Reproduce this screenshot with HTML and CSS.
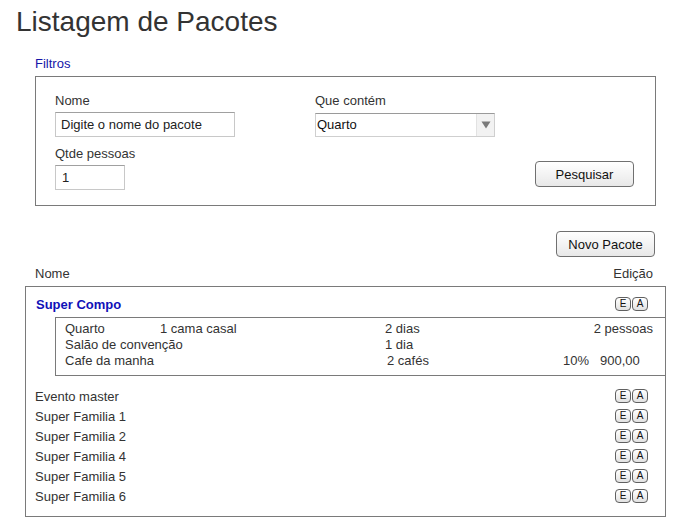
FILE: index.html
```html
<!DOCTYPE html>
<html lang="pt">
<head>
<meta charset="utf-8">
<title>Listagem de Pacotes</title>
<link rel="stylesheet" href="styles.css">
</head>
<body>
<h1 class="title">Listagem de Pacotes</h1>
<main class="page">
  <section class="filters">
    <div class="filters-label">Filtros</div>
    <div class="filters-box">
      <div class="field">
        <label class="field-label">Nome</label>
        <div class="input input-name">Digite o nome do pacote</div>
      </div>
      <div class="field">
        <label class="field-label">Que contém</label>
        <div class="select">
          <span class="select-value">Quarto</span>
          <span class="select-arrow"><svg width="10" height="8" viewBox="0 0 10 8"><path d="M0.5 0.5 H9.5 L5 7.5 Z" fill="#7a7a7a"/></svg></span>
        </div>
      </div>
      <div class="field">
        <label class="field-label">Qtde pessoas</label>
        <div class="input input-qty">1</div>
      </div>
      <div class="search-cell">
        <button class="btn">Pesquisar</button>
      </div>
    </div>
  </section>

  <div class="actions">
    <button class="btn">Novo Pacote</button>
  </div>

  <div class="list-head">
    <span>Nome</span>
    <span>Edição</span>
  </div>

  <div class="list">
    <div class="row row-open">
      <span class="pkg-name">Super Compo</span>
      <span class="edit"><span class="mini">E</span><span class="mini">A</span></span>
    </div>
    <div class="details">
      <span>Quarto</span><span>1 cama casal</span><span>2 dias</span><span class="span2 right">2 pessoas</span>
      <span>Salão de convenção</span><span></span><span>1 dia</span><span></span><span></span>
      <span>Cafe da manha</span><span></span><span class="indent">2 cafés</span><span>10%</span><span>900,00</span>
    </div>
    <div class="rows">
      <div class="row"><span>Evento master</span><span class="edit"><span class="mini">E</span><span class="mini">A</span></span></div>
      <div class="row"><span>Super Familia 1</span><span class="edit"><span class="mini">E</span><span class="mini">A</span></span></div>
      <div class="row"><span>Super Familia 2</span><span class="edit"><span class="mini">E</span><span class="mini">A</span></span></div>
      <div class="row"><span>Super Familia 4</span><span class="edit"><span class="mini">E</span><span class="mini">A</span></span></div>
      <div class="row"><span>Super Familia 5</span><span class="edit"><span class="mini">E</span><span class="mini">A</span></span></div>
      <div class="row"><span>Super Familia 6</span><span class="edit"><span class="mini">E</span><span class="mini">A</span></span></div>
    </div>
  </div>
</main>
</body>
</html>
```

FILE: styles.css
```css
* { box-sizing: border-box; }

body {
  margin: 0;
  background: #fff;
  color: #333;
  font-family: "Liberation Sans", Arial, sans-serif;
  font-size: 13px;
  line-height: 16px;
}

.title {
  margin: 6px 0 0 16px;
  font-size: 28px;
  line-height: 32px;
  font-weight: normal;
  color: #333;
}

.page {
  padding: 0 7px 0 25px;
}

.filters {
  margin: 18px 10px 0 10px;
}

.filters-label {
  color: #1515a8;
  line-height: 15px;
  margin-bottom: 5px;
}

.filters-box {
  border: 1px solid #7a7a7a;
  display: grid;
  grid-template-columns: 260px 1fr;
  row-gap: 9px;
  padding: 16px 21px 15px 19px;
}

.field {
  display: flex;
  flex-direction: column;
  align-items: flex-start;
}

.field-label {
  line-height: 16px;
  margin-bottom: 3px;
}

.input {
  height: 25px;
  border: 1px solid #c8c8c8;
  border-top-color: #a0a0a0;
  background: #fff;
  color: #222;
  padding: 0 5px;
  line-height: 23px;
}

.input-name { width: 180px; }
.input-qty { width: 70px; padding-left: 6px; }

.select {
  margin-top: 1px;
  width: 180px;
  height: 24px;
  border: 1px solid #cfcfcf;
  border-top-color: #9a9a9a;
  display: flex;
  align-items: stretch;
  color: #111;
}

.select-value {
  flex: 1;
  padding-left: 1px;
  line-height: 22px;
}

.select-arrow {
  width: 18px;
  background: #f2f2f2;
  border-left: 1px solid #e2e2e2;
  display: flex;
  align-items: center;
  justify-content: center;
}

.search-cell {
  display: flex;
  justify-content: flex-end;
  align-items: flex-end;
  padding-bottom: 3px;
}

.btn {
  font-family: "Liberation Sans", Arial, sans-serif;
  font-size: 13px;
  color: #111;
  width: 99px;
  height: 26px;
  border: 1px solid #707070;
  border-radius: 4px;
  background: linear-gradient(#ffffff, #e8e8e8);
  padding: 0;
}

.actions {
  display: flex;
  justify-content: flex-end;
  margin: 25px 11px 0 0;
}

.list-head {
  display: flex;
  justify-content: space-between;
  padding: 0 13px 0 10px;
  margin-top: 9px;
  margin-bottom: 4px;
}

.list {
  border: 1px solid #7a7a7a;
  padding-bottom: 9px;
}

.row {
  display: flex;
  justify-content: space-between;
  align-items: center;
  height: 20px;
  padding: 0 17px 0 9px;
}

.row-open {
  height: 16px;
  margin: 10px 0 4px;
  padding-left: 10px;
}

.pkg-name {
  color: #1010b8;
  font-weight: bold;
}

.edit {
  display: flex;
  gap: 1px;
  margin-top: -2px;
}

.mini {
  width: 16px;
  height: 14px;
  border: 1px solid #606060;
  border-radius: 4px;
  background: linear-gradient(#ffffff, #e2e2e2);
  font-size: 10px;
  line-height: 12px;
  text-align: center;
  color: #111;
}

.details {
  margin-left: 29px;
  border: 1px solid #7a7a7a;
  border-right: none;
  display: grid;
  grid-template-columns: 95px 225px 1fr 37px 53px;
  padding: 3px 12px 6px 9px;
  line-height: 16px;
  white-space: nowrap;
}

.span2 { grid-column: span 2; }
.right { text-align: right; }
.indent { padding-left: 2px; }

.rows {
  margin-top: 11px;
}
```
